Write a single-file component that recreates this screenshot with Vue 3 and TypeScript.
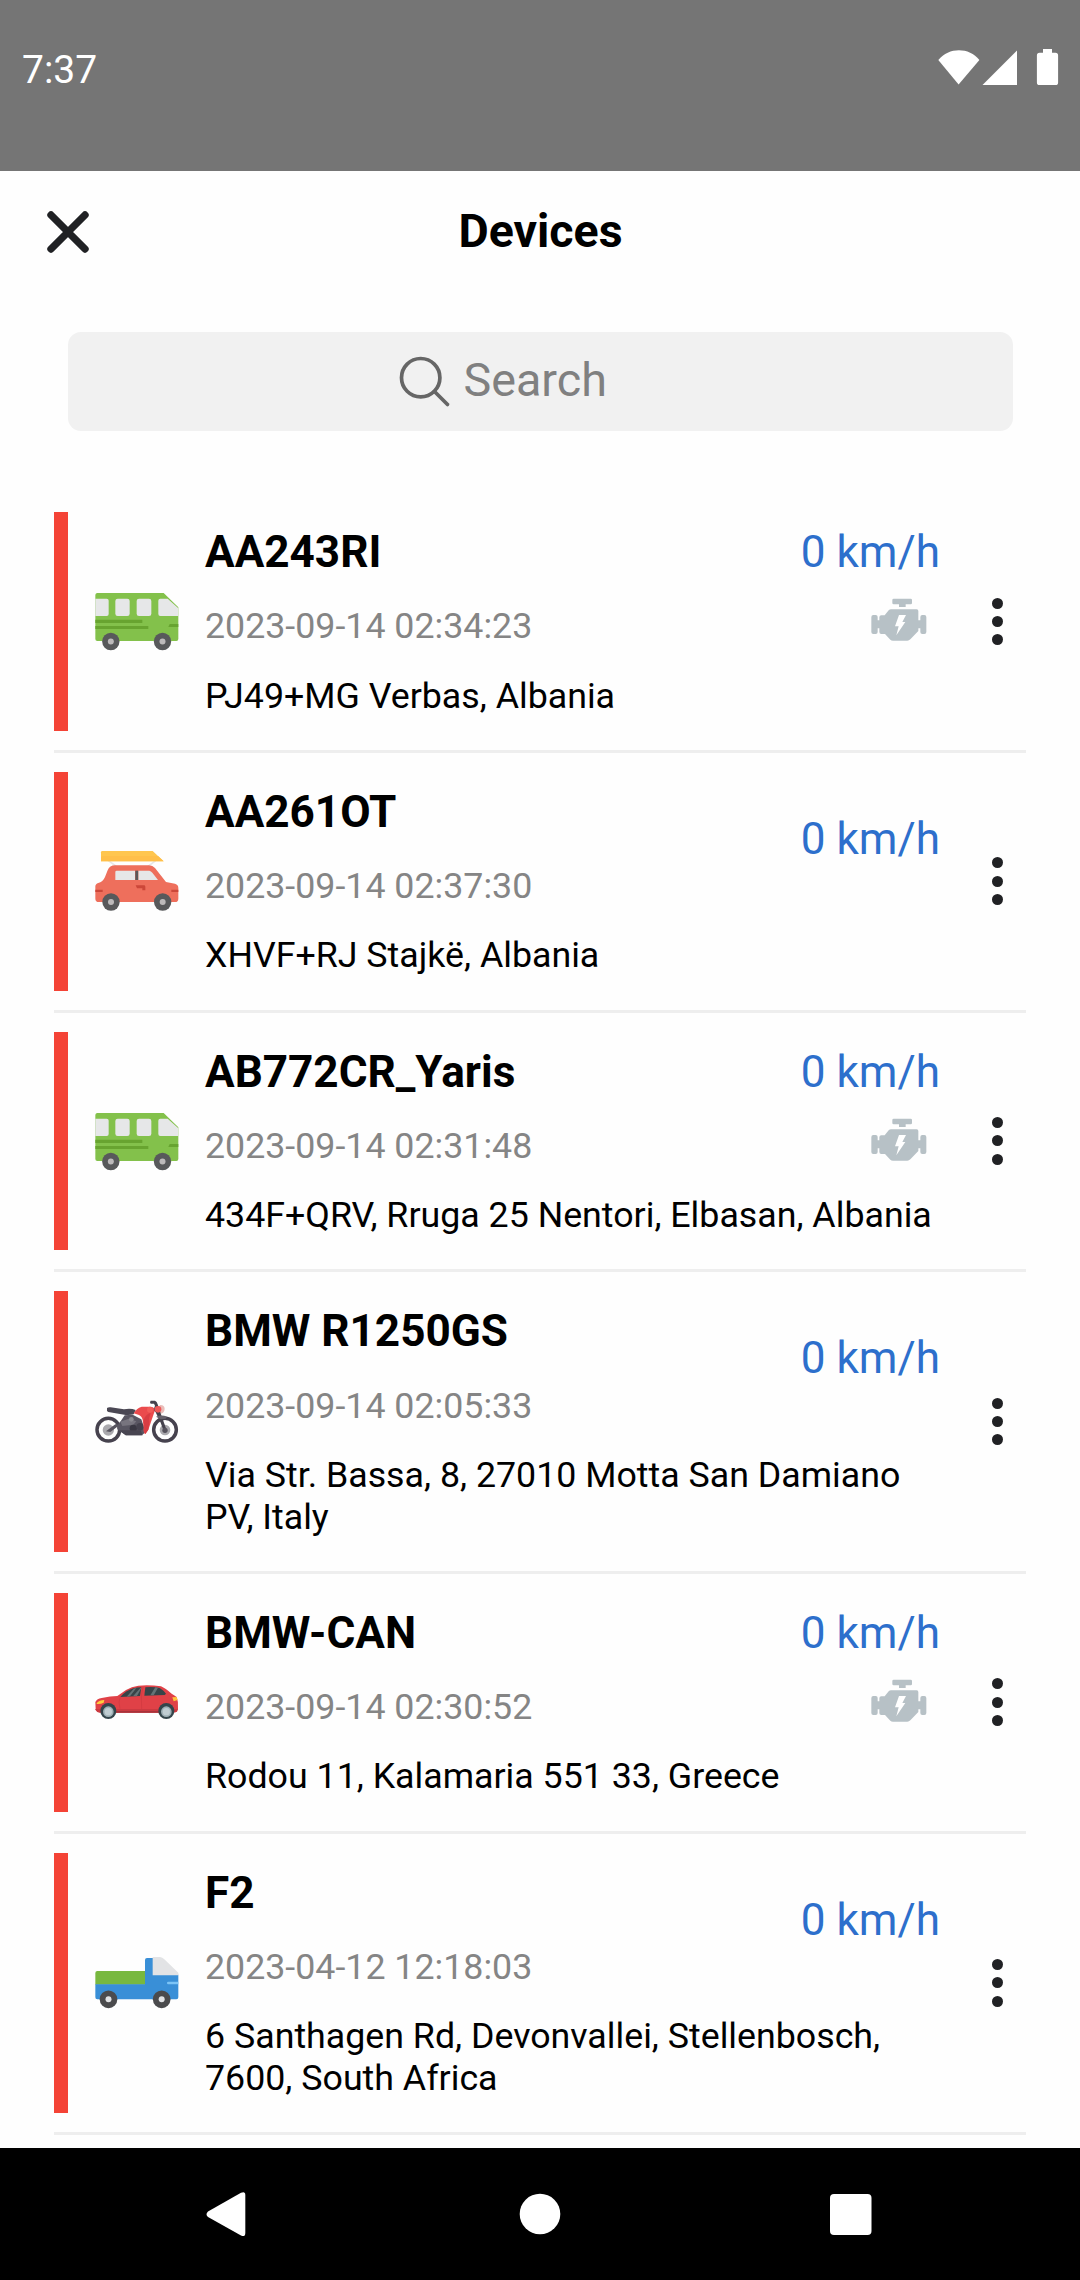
<script setup lang="ts">
type Vehicle = 'bus' | 'roofcar' | 'moto' | 'hatch' | 'truck'

interface Device {
  name: string
  time: string
  address: string
  speed: string
  engine: boolean
  vehicle: Vehicle
}

const devices: Device[] = [
  { name: 'AA243RI', time: '2023-09-14 02:34:23', address: 'PJ49+MG Verbas, Albania', speed: '0 km/h', engine: true, vehicle: 'bus' },
  { name: 'AA261OT', time: '2023-09-14 02:37:30', address: 'XHVF+RJ Stajkë, Albania', speed: '0 km/h', engine: false, vehicle: 'roofcar' },
  { name: 'AB772CR_Yaris', time: '2023-09-14 02:31:48', address: '434F+QRV, Rruga 25 Nentori, Elbasan, Albania', speed: '0 km/h', engine: true, vehicle: 'bus' },
  { name: 'BMW R1250GS', time: '2023-09-14 02:05:33', address: 'Via Str. Bassa, 8, 27010 Motta San Damiano PV, Italy', speed: '0 km/h', engine: false, vehicle: 'moto' },
  { name: 'BMW-CAN', time: '2023-09-14 02:30:52', address: 'Rodou 11, Kalamaria 551 33, Greece', speed: '0 km/h', engine: true, vehicle: 'hatch' },
  { name: 'F2', time: '2023-04-12 12:18:03', address: '6 Santhagen Rd, Devonvallei, Stellenbosch, 7600, South Africa', speed: '0 km/h', engine: false, vehicle: 'truck' },
]
</script>

<template>
  <div class="screen">
    <div class="status">
      <span class="clock">7:37</span>
      <svg class="status-icons" viewBox="0 0 122 38" width="122" height="38">
        <path d="M0.3 12 C11 -1 31 -1 41.4 12 L20.6 36.5Z" fill="#fff" />
        <path d="M44.5 37 L79 2.5 V37Z" fill="#fff" />
        <path d="M105 1h9v3.8h3.5a2.6 2.6 0 0 1 2.6 2.6V34.400a2.600 2.600 0 0 1-2.600 2.600h-16a2.600 2.600 0 0 1-2.600-2.600V7.400a2.600 2.600 0 0 1 2.600-2.600h3.500z" fill="#fff" />
      </svg>
    </div>

    <main class="sheet">
      <header class="header">
        <svg class="close" viewBox="0 0 42 42" width="42" height="42">
          <path d="M4 4L38 38M38 4L4 38" stroke="#202124" stroke-width="7.4" stroke-linecap="round" />
        </svg>
        <h1 class="title">Devices</h1>
        <span class="header-end"></span>
      </header>

      <div class="search">
        <svg viewBox="0 0 52 52" width="52" height="52" fill="none" stroke="#666" stroke-width="3.700">
          <circle cx="21.700" cy="21.700" r="19.200" />
          <path d="M35.500 35.500L48.500 48.500" stroke-linecap="round" />
        </svg>
        <span>Search</span>
      </div>

      <section class="list">
        <div v-for="d in devices" :key="d.name" class="item">
          <div class="bar"></div>
          <div class="vehicle">
            <svg v-if="d.vehicle === 'bus'" viewBox="44 27 252 252">
              <path d="M50 69H250L294 112V207a6 6 0 0 1-6 6H51a6 6 0 0 1-6-6V75a6 6 0 0 1 5-6z" fill="#83c14b" />
              <path d="M45 86H79a6 6 0 0 1 6 6V132a6 6 0 0 1-6 6H45z" fill="#e6e7e8" />
              <rect x="105" y="86" width="43" height="52" rx="7" fill="#e6e7e8" />
              <rect x="169" y="86" width="44" height="52" rx="7" fill="#e6e7e8" />
              <path d="M240 86H262L294 115V138H240a6 6 0 0 1-6-6V92a6 6 0 0 1 6-6z" fill="#e6e7e8" />
              <path d="M45 149.500H186V159H45zM45 168H204V177H45zM268 162H294V171H264z" fill="#68a430" />
              <g fill="#58595b"><circle cx="91.500" cy="214.500" r="26" /><circle cx="246.500" cy="214.500" r="26" /></g>
              <g fill="#bdbabb"><circle cx="91.500" cy="214.500" r="9" /><circle cx="246.500" cy="214.500" r="9" /></g>
            </svg>

            <svg v-else-if="d.vehicle === 'roofcar'" viewBox="44 27 252 252">
              <path d="M84 92L108 109M226 92L203 109" stroke="#e6e7e8" stroke-width="5" />
              <path d="M66 63H217L250 94H62V67a4 4 0 0 1 4-4z" fill="#ffc64f" />
              <path d="M66 78H233L250 94H62V82z" fill="#ffbf4a" />
              <path d="M104 106H206Q217 106 224 114L257 156 284 161Q294 164 294 174V206Q294 216 284 216H56Q45 216 45 206V168Q46 160 56 158 68 155 74 141L82 121Q88 106 104 106z" fill="#ee6f5c" />
              <path d="M109 122H164V150H105V126a4 4 0 0 1 4-4zM174 122H207Q212 123 216 128L233 150H174z" fill="#e6e7e8" />
              <rect x="165" y="122" width="8.500" height="28" fill="#58595b" />
              <path d="M166 166H191a4 4 0 0 1 4 4V181H186V175H170zM45 179H67V186H45zM273 179H294V186H273z" fill="#cc4739" />
              <g fill="#58595b"><circle cx="92" cy="216" r="26" /><circle cx="247" cy="216" r="26" /></g>
              <g fill="#bdbabb"><circle cx="92" cy="216" r="9" /><circle cx="247" cy="216" r="9" /></g>
            </svg>

            <svg v-else-if="d.vehicle === 'moto'" viewBox="44 0 252 252">
              <circle cx="84" cy="149" r="34" fill="none" stroke="#46424e" stroke-width="10.500" />
              <circle cx="254" cy="149" r="34" fill="none" stroke="#46424e" stroke-width="10.500" />
              <circle cx="84" cy="150" r="17" fill="#aaa9ae" />
              <circle cx="254" cy="150" r="16" fill="#aaa9ae" />
              <path d="M77 154L105 133 119 134 90 156z" fill="#57545f" />
              <path d="M80 84Q84 81 91 82L131 88Q151 84 166 90L160 103Q151 106 136 105L84 96Q78 93 80 84z" fill="#4b4854" />
              <path d="M133 106L157 104 183 118 196 157 184 166H137L112 149Q107 137 121 124z" fill="#595662" />
              <path d="M120 125L145 116 168 124 159 134 126 138z" fill="#77747e" />
              <circle cx="159" cy="145" r="11" fill="#393742" />
              <circle cx="179" cy="140" r="11" fill="#45424e" />
              <circle cx="153" cy="118" r="7" fill="#8a8990" />
              <path d="M116 151H181L187 166H136z" fill="#484551" />
              <path d="M160 100Q168 85 184 80H209Q223 80 224 91L218 108 204 149 195 162Q188 158 190 143L187 119Q184 107 174 104z" fill="#ea4b4d" />
              <path d="M211 98Q205 113 207 126L204 149 195 162Q190 156 192 142L190 119Q196 103 211 98z" fill="#d83d43" />
              <circle cx="209" cy="89" r="9" fill="#f15c59" />
              <path d="M239 75Q252 74 253 86 252 99 241 101L231 89z" fill="#e9bdb9" />
              <path d="M211 62H224Q230 64 232 73L245 112 258 148 251 155 241 128 226 97Q218 90 224 77L221 71H211Q207 66 211 62z" fill="#45424d" />
              <circle cx="233" cy="88" r="10" fill="#ef5757" />
              <path d="M227 110Q244 103 260 110L256 116 241 118z" fill="#66616b" />
              <circle cx="254" cy="151" r="8" fill="#55525c" />
            </svg>

            <svg v-else-if="d.vehicle === 'hatch'" viewBox="44 -14 252 252">
              <path d="M45 112Q50 102 64 100 91 94 111 94L137 76Q154 65 174 63 207 60 242 65 255 71 274 87 283 92 289 97 295 112 293 132 291 142 279 143H58Q48 142 46 133z" fill="#e04147" />
              <path d="M45 133H293L290 141Q285 144 275 144H58Q49 143 45 135z" fill="#cb3a41" />
              <path d="M104 139H239V144H104z" fill="#a8323a" />
              <path d="M120 97Q136 78 159 71 170 68 183 68L179 94z" fill="#374448" />
              <path d="M192 93L195 68Q220 66 238 70 251 78 257 87L253 91z" fill="#374448" />
              <path d="M139 96L160 72 168 70 149 95zM158 95L180 70 183 70 170 94zM210 92L225 68 233 69 220 92z" fill="#647376" />
              <path d="M49 115Q57 106 72 106L70 114Q61 119 49 118z" fill="#ffce3d" />
              <path d="M276 98L289 97 292 106 280 110z" fill="#ffc43c" />
              <path d="M188 67L183 94 184 133M120 97L116 112 119 132" stroke="#c9363d" stroke-width="1.500" fill="none" />
              <g fill="#34454b"><circle cx="84" cy="139" r="24" /><circle cx="258" cy="139" r="24" /></g>
              <g fill="#9fb0b6"><circle cx="84" cy="141" r="16" /><circle cx="258" cy="141" r="16" /></g>
              <g fill="#c0cdd2"><circle cx="84" cy="141" r="11" /><circle cx="258" cy="141" r="11" /></g>
            </svg>

            <svg v-else viewBox="44 3 252 252">
              <path d="M51 93H194V134H45V99a6 6 0 0 1 6-6z" fill="#78b83f" />
              <path d="M200 54H219L294 104V172a6 6 0 0 1-6 6H51a6 6 0 0 1-6-6V133H194V60a6 6 0 0 1 6-6z" fill="#398fd7" />
              <path d="M217 51H239Q246 52 252 58L294 98V106H217z" fill="#e2e3e5" />
              <path d="M264 125H294V133H264a4 4 0 0 1 0-8z" fill="#7cc4f6" />
              <g fill="#4b4b4d"><circle cx="84.500" cy="178" r="26.500" /><circle cx="244" cy="178" r="26.500" /></g>
              <g fill="#e2e3e5"><circle cx="84.500" cy="178" r="9" /><circle cx="244" cy="178" r="9" /></g>
            </svg>
          </div>

          <div class="info">
            <div class="top">
              <div class="texts">
                <div class="name">{{ d.name }}</div>
                <div class="time">{{ d.time }}</div>
              </div>
              <div class="readings">
                <div class="speed">{{ d.speed }}</div>
                <svg v-if="d.engine" class="engine" viewBox="33 24 168 129">
                  <path d="M101 26H152Q156 26 156 30V39Q156 43 152 43H137V51H117V43H101Q97 43 97 39V30Q97 26 101 26z" fill="#b7c1c6" />
                  <path d="M93 58H170Q175 58 175 63V91H181V81Q181 75 187 75H193Q199 75 199 81V126Q199 132 193 132H187Q181 132 181 126V115H175V123L151 148Q147 152 142 152H99Q94 152 91 149L75 132H64Q58 132 58 126V115H53V126Q53 132 47 132H40Q34 132 34 126V81Q34 75 40 75H47Q53 75 53 81V91H58V82Q58 76 64 76H74L86 61Q89 58 93 58z" fill="#b7c1c6" />
                  <path d="M117 75H138L127 96H136L109 136 116 109H105z" fill="#fff" />
                </svg>
              </div>
            </div>
            <div class="address">{{ d.address }}</div>
          </div>

          <div class="menu"><i></i><i></i><i></i></div>
        </div>
      </section>
    </main>

    <nav class="nav">
      <svg viewBox="0 0 1080 132" width="1080" height="132" fill="#fff">
        <path d="M208 63.500L241 44.800Q245.300 43 245.300 47V85Q245.300 89.500 241 87.500L208 69Q205 66.300 208 63.500z" />
        <circle cx="540" cy="66" r="20.300" />
        <rect x="830" y="46" width="41.500" height="41" rx="4" />
      </svg>
    </nav>
  </div>
</template>

<style>
html,
body {
  margin: 0;
  background: #fff;
}
</style>

<style scoped>
.screen {
  width: 1080px;
  height: 2280px;
  display: flex;
  flex-direction: column;
  overflow: hidden;
  background: #fefefe;
  font-family: Roboto, "Liberation Sans", sans-serif;
  color: #000;
}
.status {
  flex: none;
  height: 171px;
  box-sizing: border-box;
  padding: 45px 20px 0 22px;
  display: flex;
  justify-content: space-between;
  align-items: flex-start;
  background: #757575;
}
.clock {
  font-size: 39px;
  line-height: 50px;
  color: #fff;
}
.status-icons {
  margin-top: 3px;
}
.sheet {
  flex: 1;
  min-height: 0;
}
.header {
  height: 121px;
  padding: 0 47px;
  display: flex;
  align-items: center;
  justify-content: space-between;
}
.header-end {
  width: 42px;
}
.title {
  margin: -1px 0 0 1px;
  font-size: 46.500px;
  line-height: 56px;
  font-weight: 700;
}
.search {
  box-sizing: border-box;
  height: 99px;
  margin: 40px 67px 0 68px;
  padding-left: 331px;
  border-radius: 13px;
  background: #f1f1f1;
  display: flex;
  align-items: center;
  gap: 12.500px;
  font-size: 46.700px;
  color: #808080;
}
.search span {
  line-height: 56px;
  margin-top: -4px;
}
.list {
  padding: 81px 54px 0;
}
.item {
  display: flex;
  padding-bottom: 19px;
  margin-bottom: 19px;
  border-bottom: 3px solid #eee;
}
.bar {
  flex: none;
  width: 14px;
  background: #f44336;
}
.vehicle {
  flex: none;
  width: 84px;
  margin: 0 26.500px;
  display: flex;
  align-items: center;
}
.vehicle svg {
  display: block;
  width: 84px;
  height: 84px;
}
.info {
  flex: none;
  width: 735px;
  padding: 14px 0;
}
.top {
  display: flex;
  justify-content: space-between;
  height: 121px;
}
.name {
  font-size: 44.100px;
  line-height: 52px;
  font-weight: 700;
}
.time {
  margin-top: 27.400px;
  font-size: 35.750px;
  line-height: 42px;
  color: #858585;
}
.readings {
  height: 106px;
  display: flex;
  flex-direction: column;
  justify-content: center;
  align-items: flex-end;
}
.speed {
  font-size: 44.100px;
  line-height: 52px;
  color: #2d6fcc;
}
.engine {
  width: 56px;
  height: 43px;
  margin: 20px 13px -9px 0;
}
.address {
  margin-top: 28.700px;
  margin-bottom: -0.500px;
  font-size: 35.750px;
  line-height: 41.600px;
}
.menu {
  flex: none;
  box-sizing: border-box;
  width: 86px;
  padding-left: 28.500px;
  display: flex;
  flex-direction: column;
  align-items: center;
  justify-content: center;
  gap: 7.400px;
}
.menu i {
  width: 11px;
  height: 11px;
  border-radius: 50%;
  background: #202124;
}
.nav {
  flex: none;
  height: 132px;
  background: #000;
}
.nav svg {
  display: block;
}
</style>
